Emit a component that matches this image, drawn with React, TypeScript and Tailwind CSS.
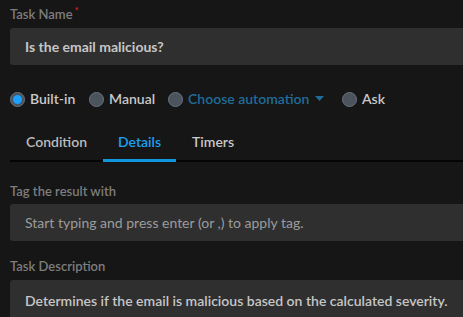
const font = { fontFamily: 'Lato, "Noto Sans", sans-serif' };

function Radio({ label, checked, accent }: { label: string; checked?: boolean; accent?: boolean }) {
  return (
    <label className="flex items-center gap-[5px]">
      <span className="flex h-[15px] w-[15px] items-center justify-center rounded-full border border-[#6b737d] bg-[#4b535c]">
        {checked && <span className="h-[9px] w-[9px] rounded-full bg-[#1aa0ff]" />}
      </span>
      <span className={accent ? 'text-[#1f6d99]' : 'text-[#c9c9c9]'}>{label}</span>
      {accent && (
        <svg width="9" height="6" viewBox="0 0 9 6" className="ml-[1px]">
          <path d="M0 0h9L4.5 5z" fill="#1f6d99" />
        </svg>
      )}
    </label>
  );
}

export default function App() {
  return (
    <div className="h-[317px] w-[463px] overflow-hidden bg-[#161616] pl-[10px]" style={font}>
      <div className="pt-[5px] text-[13px] leading-[18px] font-semibold text-[#7d7d7d]">
        Task Name<span className="relative -top-[5px] ml-[2px] text-[10px] text-[#d8232a]">*</span>
      </div>
      <div className="mt-[4px] flex h-[37px] items-center rounded-l-[3px] bg-[#2f2f2f] pl-[15px] text-[14px] font-bold text-[#c6c6c6]">
        Is the email malicious?
      </div>

      <div className="mt-[24px] flex h-[20px] items-center text-[14px] leading-[20px] font-semibold">
        <div className="w-[79px]"><Radio label="Built-in" checked /></div>
        <div className="w-[79px]"><Radio label="Manual" /></div>
        <div className="w-[174px]"><Radio label="Choose automation" accent /></div>
        <Radio label="Ask" />
      </div>

      <div className="mt-[23px] flex border-b-2 border-[#050505] text-[14px] leading-[20px] font-semibold">
        <div className="w-[93px] pb-[8px] pl-[16px] text-[#bdbdbd]">Condition</div>
        <div className="-mb-[2px] w-[73px] border-b-[3px] border-[#1096dd] pb-[7px] text-center text-[#1ba0f2]">Details</div>
        <div className="pb-[8px] pl-[16px] text-[#c9c9c9]">Timers</div>
      </div>

      <div className="mt-[20px] text-[13px] leading-[18px] font-semibold text-[#7d7d7d]">Tag the result with</div>
      <div className="mt-[4px] flex h-[37px] items-center rounded-l-[3px] bg-[#2f2f2f] pl-[15px] text-[14px] text-[#9c9c9c]">
        Start typing and press enter (or ,) to apply tag.
      </div>

      <div className="mt-[16px] text-[13px] leading-[18px] font-semibold text-[#7d7d7d]">Task Description</div>
      <div className="mt-[5px] h-[60px] rounded-l-[3px] bg-[#2f2f2f] pl-[15px] pt-[11px] text-[14px] leading-[20px] font-semibold text-[#c6c6c6]">
        Determines if the email is malicious based on the calculated severity.
      </div>
    </div>
  );
}
